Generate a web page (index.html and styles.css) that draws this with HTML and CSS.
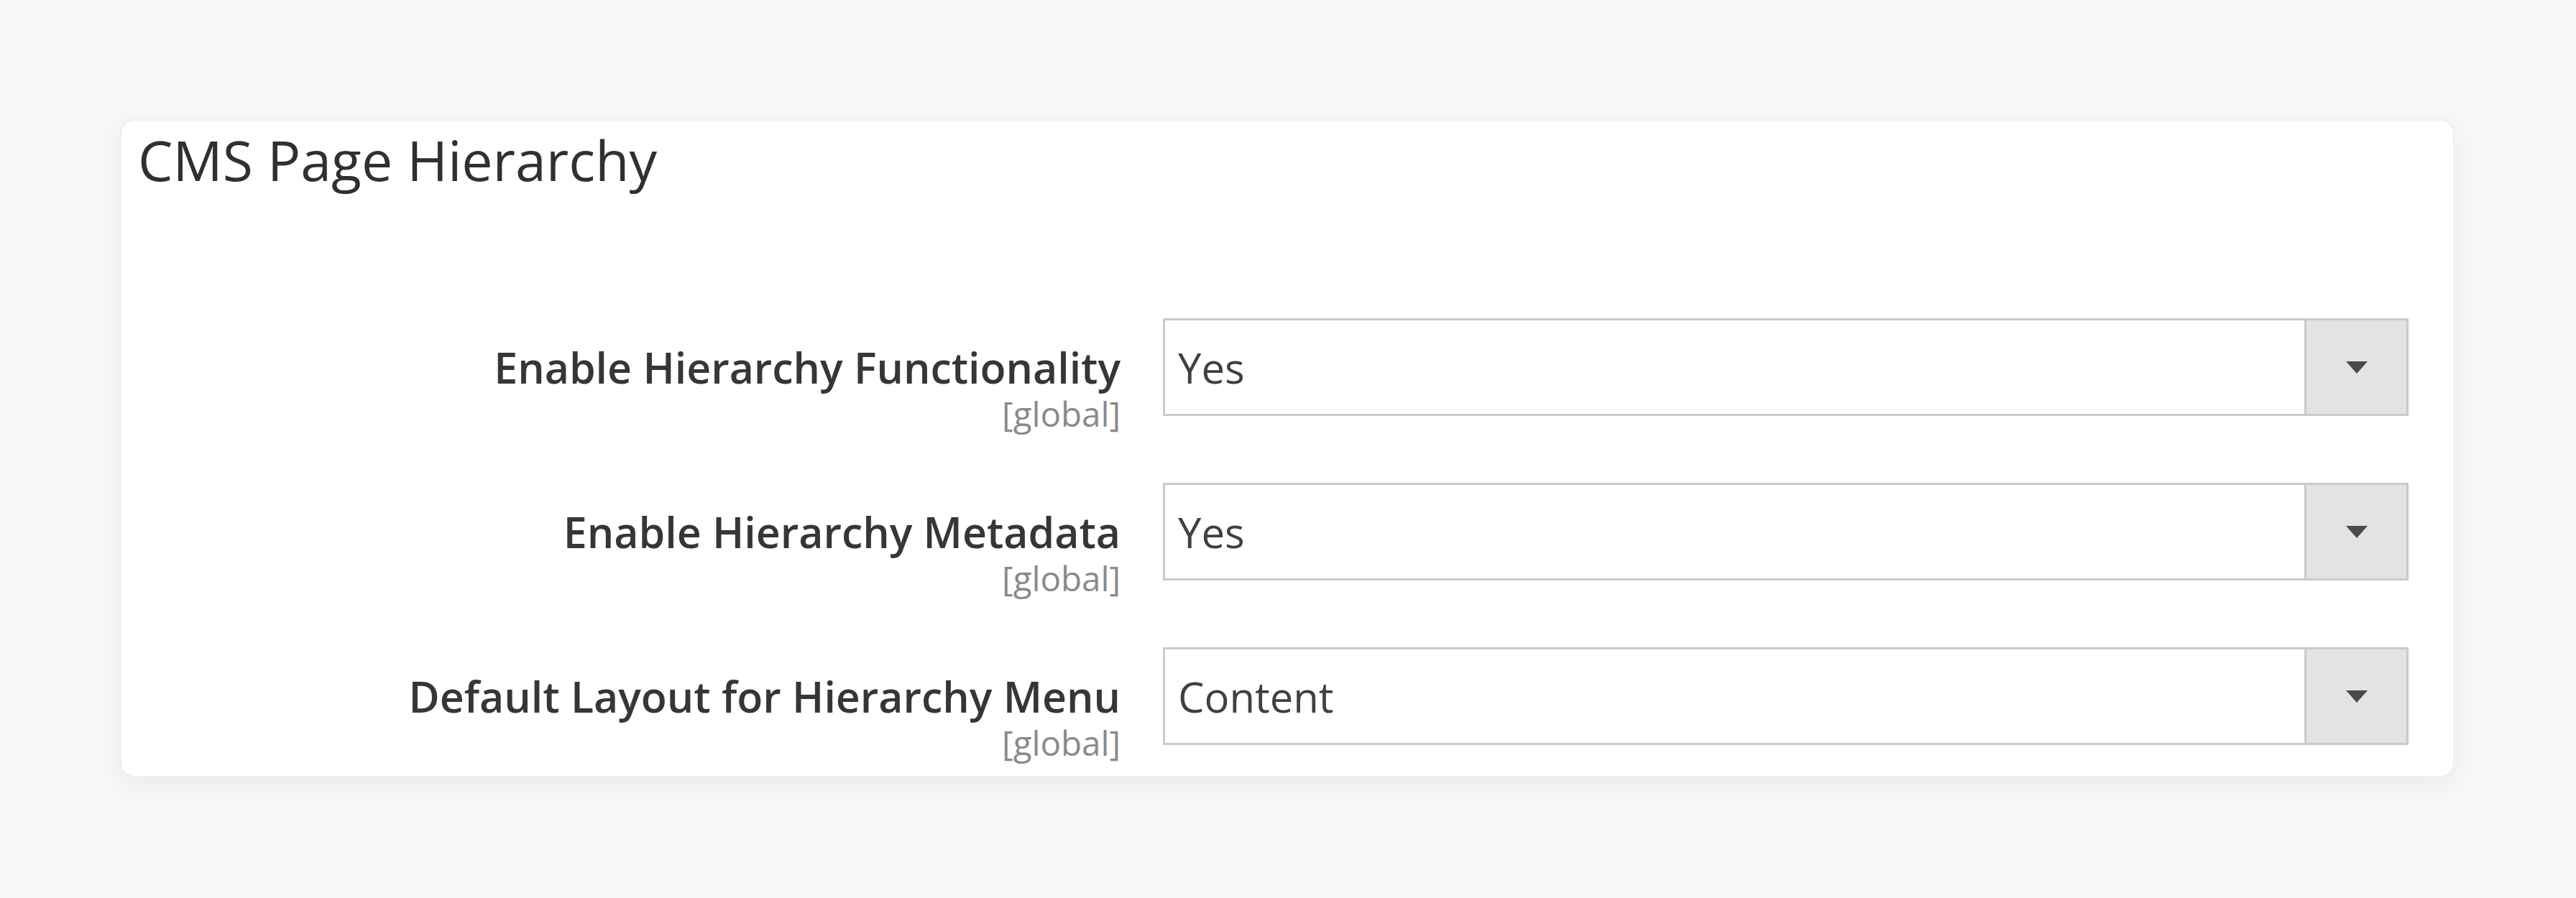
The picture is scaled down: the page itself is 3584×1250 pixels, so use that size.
FILE: index.html
```html
<!DOCTYPE html>
<html lang="en">
<head>
<meta charset="utf-8">
<title>CMS Page Hierarchy</title>
<link rel="stylesheet" href="styles.css">
</head>
<body>
<div class="page">
  <section class="card">
    <h2 class="card-title">CMS Page Hierarchy</h2>
    <div class="fields">
      <div class="field">
        <div class="label-col">
          <div class="label">Enable Hierarchy Functionality</div>
          <div class="scope">[global]</div>
        </div>
        <div class="select">
          <span class="select-value">Yes</span>
          <span class="select-btn"><span class="arrow"></span></span>
        </div>
      </div>
      <div class="field">
        <div class="label-col">
          <div class="label">Enable Hierarchy Metadata</div>
          <div class="scope">[global]</div>
        </div>
        <div class="select">
          <span class="select-value">Yes</span>
          <span class="select-btn"><span class="arrow"></span></span>
        </div>
      </div>
      <div class="field">
        <div class="label-col">
          <div class="label">Default Layout for Hierarchy Menu</div>
          <div class="scope">[global]</div>
        </div>
        <div class="select">
          <span class="select-value">Content</span>
          <span class="select-btn"><span class="arrow"></span></span>
        </div>
      </div>
    </div>
  </section>
</div>
</body>
</html>
```

FILE: styles.css
```css
* { box-sizing: border-box; }
html, body {
  margin: 0;
  padding: 0;
  background: #f7f7f7;
  font-family: "Open Sans", "Noto Sans", "Liberation Sans", sans-serif;
}
.page {
  width: 3584px;
  height: 1250px;
  padding: 166px 169px 0 167px;
}
.card {
  width: 3248px;
  height: 916px;
  background: #ffffff;
  border: 2px solid #efefef;
  border-radius: 20px;
  box-shadow: 0 10px 30px rgba(0, 0, 0, 0.05);
  padding: 9px 62px 0 23px;
}
.card-title {
  margin: 0;
  font-size: 77px;
  line-height: 92px;
  font-weight: 400;
  color: #303030;
}
.fields {
  margin-top: 174px;
  display: flex;
  flex-direction: column;
  gap: 67px;
}
.field {
  display: grid;
  grid-template-columns: 1367px 1fr;
  column-gap: 59px;
  align-items: start;
}
.label-col {
  text-align: right;
  padding-top: 32px;
}
.label {
  font-size: 59px;
  line-height: 72px;
  font-weight: 600;
  color: #363636;
}
.scope {
  font-size: 47.5px;
  line-height: 58px;
  color: #8a8a8a;
}
.select {
  height: 136px;
  border: 3px solid #cacaca;
  display: flex;
  align-items: center;
  background: #ffffff;
}
.select-value {
  flex: 1;
  padding-left: 18px;
  font-size: 58px;
  color: #404040;
}
.select-btn {
  width: 142px;
  height: 100%;
  background: #e3e3e3;
  border-left: 3px solid #cacaca;
  display: flex;
  align-items: center;
  justify-content: center;
}
.arrow {
  width: 0;
  height: 0;
  border-left: 15px solid transparent;
  border-right: 15px solid transparent;
  border-top: 17px solid #4a4a4a;
}
```
